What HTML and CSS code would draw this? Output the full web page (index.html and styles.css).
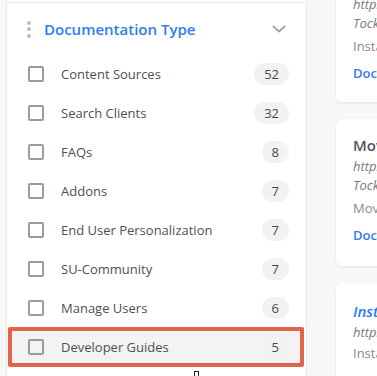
FILE: index.html
```html
<!DOCTYPE html>
<html>
<head>
<meta charset="utf-8">
<link rel="stylesheet" href="styles.css">
</head>
<body>
<div class="page">
  <aside class="sidebar">
    <div class="sep"></div>
    <div class="facet-head">
      <span class="drag"><i></i><i></i><i></i></span>
      <span class="facet-title">Documentation Type</span>
      <svg class="chev" width="14" height="8" viewBox="0 0 14 8"><path d="M1.5 1.5 L7 6.5 L12.5 1.5" fill="none" stroke="#a5a5a5" stroke-width="2" stroke-linecap="round" stroke-linejoin="round"/></svg>
    </div>
    <ul class="facet-list">
      <li class="row"><span class="cb"></span><span class="label">Content Sources</span><span class="count">52</span></li>
      <li class="row"><span class="cb"></span><span class="label">Search Clients</span><span class="count">32</span></li>
      <li class="row"><span class="cb"></span><span class="label">FAQs</span><span class="count">8</span></li>
      <li class="row"><span class="cb"></span><span class="label">Addons</span><span class="count">7</span></li>
      <li class="row"><span class="cb"></span><span class="label">End User Personalization</span><span class="count">7</span></li>
      <li class="row"><span class="cb"></span><span class="label">SU-Community</span><span class="count">7</span></li>
      <li class="row"><span class="cb"></span><span class="label">Manage Users</span><span class="count">6</span></li>
      <li class="row hl"><span class="cb"></span><span class="label">Developer Guides</span><span class="count">5</span></li>
      <li class="row next"><span class="cb"></span><span class="count">4</span></li>
    </ul>
    <span class="cursor"></span>
  </aside>
  <main class="results">
    <div class="card c1">
      <p class="url">https://docs.searchunify.com/Content/Search-Clients/</p>
      <p class="url">TockenAuthentication.htm</p>
      <p class="desc">Installation and configuration guide</p>
      <p class="tag">Documentation</p>
    </div>
    <div class="card c2">
      <p class="title">Moving Search Clients</p>
      <p class="url">https://docs.searchunify.com/Content/Search-Clients/</p>
      <p class="url">TockenMigration.htm</p>
      <p class="desc">Moving a search client between instances</p>
      <p class="tag">Documentation</p>
    </div>
    <div class="card c3">
      <p class="title link">Installing a Search Client</p>
      <p class="url">https://docs.searchunify.com/Content/</p>
      <p class="desc">Installation steps for search clients</p>
    </div>
  </main>
</div>
</body>
</html>
```
FILE: styles.css
```css
html, body {
  margin: 0;
  padding: 0;
  background: #f7f7f7;
  overflow: hidden;
  font-family: "Open Sans", "Liberation Sans", sans-serif;
}
.page {
  display: flex;
  align-items: flex-start;
  width: 377px;
  height: 376px;
  overflow: hidden;
}
.sidebar {
  position: relative;
  flex: 0 0 auto;
  width: 299px;
  margin-left: 6px;
  background: #fff;
  border-left: 1px solid #e8e8e8;
  border-right: 1px solid #e8e8e8;
  height: 420px;
}
.sep {
  height: 1px;
  margin-top: 2px;
  background: #e8e8e8;
}
.facet-head {
  display: flex;
  align-items: center;
  height: 51px;
  padding: 0 20px 0 20px;
}
.drag {
  display: flex;
  flex-direction: column;
  gap: 2.5px;
  width: 4px;
  margin-right: 13px;
  margin-top: 1px;
}
.drag i {
  display: block;
  width: 4px;
  height: 4px;
  border-radius: 50%;
  background: #bdbdbd;
}
.facet-title {
  flex: 1;
  font-size: 15px;
  font-weight: 600;
  color: #2e7cf0;
}
.chev {
  margin-top: 1px;
}
.facet-list {
  list-style: none;
  margin: 0;
  padding: 0;
}
.row {
  display: flex;
  align-items: center;
  height: 39px;
  padding: 0 17px 0 21px;
}
.row.hl {
  margin: 0 2px 0 1px;
  padding: 0 15px 0 20px;
  height: 40px;
  background: #f3f3f3;
  box-shadow: inset 0 0 0 4px #e0644a;
  border-radius: 2px;
}
.row.next {
  margin-top: 1px;
  justify-content: space-between;
}
.cb {
  box-sizing: border-box;
  width: 16px;
  height: 16px;
  border: 2px solid #9c9c9c;
  border-radius: 2px;
  flex: 0 0 auto;
}
.label {
  flex: 1;
  margin-left: 17px;
  font-size: 13px;
  color: #4f4f4f;
}
.count {
  box-sizing: border-box;
  height: 22px;
  line-height: 22px;
  padding: 0 10px;
  min-width: 27px;
  text-align: center;
  border-radius: 11px;
  background: #f2f2f2;
  font-size: 13px;
  color: #4a4a4a;
}
.cursor {
  position: absolute;
  left: 187px;
  top: 371px;
  width: 3px;
  height: 5px;
  border: 1px solid #222;
  background: #fff;
}
.results {
  flex: 0 0 auto;
  margin-left: 29px;
  width: 300px;
  display: flex;
  flex-direction: column;
  gap: 17px;
}
.card {
  background: #fff;
  border-radius: 6px;
  box-shadow: 0 1px 3px rgba(0,0,0,0.08);
  padding: 0 0 0 17px;
  white-space: nowrap;
}
.card p {
  margin: 0;
  font-size: 13px;
}
.c1 {
  margin-top: -20px;
  height: 122px;
}
.c2 {
  height: 147px;
  padding-top: 15px;
  box-sizing: border-box;
}
.c3 {
  height: 120px;
  padding-top: 17px;
  box-sizing: border-box;
}
.url {
  font-style: italic;
  color: #7a7a7a;
  line-height: 19px;
}
.c1 .url:first-child {
  margin-top: 15px;
}
.desc {
  color: #8a8a8a;
  line-height: 19px;
  margin-top: 4px !important;
}
.tag {
  color: #2e7cf0;
  font-weight: 600;
  margin-top: 8px !important;
  line-height: 19px;
}
.title {
  font-size: 15px !important;
  font-weight: 600;
  color: #555;
  line-height: 22px;
  margin-bottom: 1px !important;
}
.title.link {
  color: #2e7cf0;
  font-style: italic;
}
.c3 .desc {
  margin-top: 2px !important;
}
```
